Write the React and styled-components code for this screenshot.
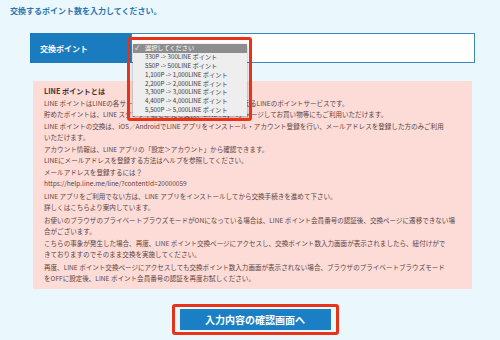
import React from 'react';
import styled, { createGlobalStyle } from 'styled-components';

const GlobalStyle = createGlobalStyle`
  body {
    margin: 0;
    background-color: #eaf8fd;
    font-family: 'Noto Sans CJK JP', 'Noto Sans', sans-serif;
  }
`;

const Page = styled.div`
  width: 500px;
  height: 340px;
  overflow: hidden;
  padding: 5px 25px 0 30px;
  box-sizing: border-box;
`;

const Heading = styled.h2`
  margin: 0 0 0 -20px;
  font-size: 8px;
  line-height: 11px;
  font-weight: 700;
  color: #2a74b2;
`;

const Row = styled.div`
  display: flex;
  height: 30px;
  margin-top: 17px;
`;

const RowHead = styled.div`
  width: 101px;
  display: flex;
  align-items: center;
  padding-left: 10px;
  box-sizing: border-box;
  background: #1a7bbf;
  color: #fff;
  font-size: 8px;
  font-weight: 700;
`;

const RowCell = styled.div`
  flex: 1;
  position: relative;
  background: #fff;
  border: 1px solid #3a86bd;
`;

const Highlight = styled.div`
  position: absolute;
  left: ${p => p.$left}px;
  top: ${p => p.$top}px;
  width: ${p => p.$width}px;
  height: ${p => p.$height}px;
  border: 3px solid #e8331b;
  border-radius: 3px;
  box-sizing: border-box;
  z-index: 3;
`;

const Menu = styled.ul`
  position: absolute;
  left: 1px;
  top: 10px;
  width: 114px;
  margin: 0;
  padding: 0 0 1px;
  list-style: none;
  background: #eeeeee;
  box-shadow: 0 1px 3px rgba(0, 0, 0, 0.35);
  z-index: 2;
`;

const MenuItem = styled.li`
  position: relative;
  height: 8.9px;
  line-height: 8.9px;
  padding-left: 12px;
  font-size: 6.2px;
  color: ${p => (p.$selected ? '#fff' : '#3a3a3a')};
  background: ${p => (p.$selected ? '#8d8d8d' : 'transparent')};
  white-space: nowrap;
`;

const Check = styled.span`
  position: absolute;
  left: 2px;
  top: 0;
  font-size: 6px;
`;

const InfoBox = styled.div`
  margin: 18px 3px 0;
  padding: 5px 10px 3px 11px;
  background: #fddcd8;
  color: #5a4543;
  font-size: 6.55px;
  line-height: 11.1px;
`;

const InfoTitle = styled.p`
  margin: 0 0 0.6px;
  font-weight: 700;
  font-size: 7.2px;
  color: #4a3432;
`;

const Para = styled.p`
  margin: 0 0 1.5px;
  white-space: nowrap;
`;

const Actions = styled.div`
  display: flex;
  justify-content: center;
  margin-top: 15px;
  padding-left: 5px;
`;

const Frame = styled.div`
  border: 3px solid #e8331b;
  border-radius: 3px;
  padding: 2px 5px;
`;

const Button = styled.button`
  display: block;
  width: 151px;
  height: 21px;
  border: none;
  background: #1a7fc4;
  color: #fff;
  font-family: inherit;
  font-size: 10px;
  font-weight: 700;
  padding: 0;
`;

const options = [
  '330P -> 300LINE ポイント',
  '550P -> 500LINE ポイント',
  '1,100P -> 1,000LINE ポイント',
  '2,200P -> 2,000LINE ポイント',
  '3,300P -> 3,000LINE ポイント',
  '4,400P -> 4,000LINE ポイント',
  '5,500P -> 5,000LINE ポイント',
];

export default function App() {
  return (
    <>
      <GlobalStyle />
      <Page>
        <Heading>交換するポイント数を入力してください。</Heading>
        <Row>
          <RowHead>交換ポイント</RowHead>
          <RowCell>
            <Menu>
              <MenuItem $selected>
                <Check>✓</Check>選択してください
              </MenuItem>
              {options.map(o => (
                <MenuItem key={o}>{o}</MenuItem>
              ))}
            </Menu>
            <Highlight $left={-5} $top={3} $width={125} $height={84} />
          </RowCell>
        </Row>
        <InfoBox>
          <InfoTitle>LINE ポイントとは</InfoTitle>
          <Para>
            LINE ポイントはLINEの各サービスや提携サービスなどで貯まる・使えるLINEのポイントサービスです。<br />
            貯めたポイントは、LINE スタンプや着せかえと交換、LINE Pay へチャージしてお買い物等にもご利用いただけます。
          </Para>
          <Para>
            LINE ポイントの交換は、iOS／AndroidでLINE アプリをインストール・アカウント登録を行い、メールアドレスを登録した方のみご利用<br />
            いただけます。<br />
            アカウント情報は、LINE アプリの「設定＞アカウント」から確認できます。<br />
            LINEにメールアドレスを登録する方法はヘルプを参照してください。
          </Para>
          <Para>
            メールアドレスを登録するには？<br />
            https://help.line.me/line/?contentId=20000059
          </Para>
          <Para>
            LINE アプリをご利用でない方は、LINE アプリをインストールしてから交換手続きを進めて下さい。<br />
            詳しくはこちらより案内しています。
          </Para>
          <Para>
            お使いのブラウザのプライベートブラウズモードがONになっている場合は、LINE ポイント会員番号の認証後、交換ページに遷移できない場<br />
            合がございます。
          </Para>
          <Para>
            こちらの事象が発生した場合、再度、LINE ポイント交換ページにアクセスし、交換ポイント数入力画面が表示されましたら、紐付けがで<br />
            きておりますのでそのまま交換を実施してください。
          </Para>
          <Para>
            再度、LINE ポイント交換ページにアクセスしても交換ポイント数入力画面が表示されない場合、ブラウザのプライベートブラウズモード<br />
            をOFFに設定後、LINE ポイント会員番号の認証を再度お試しください。
          </Para>
        </InfoBox>
        <Actions>
          <Frame>
            <Button>入力内容の確認画面へ</Button>
          </Frame>
        </Actions>
      </Page>
    </>
  );
}
